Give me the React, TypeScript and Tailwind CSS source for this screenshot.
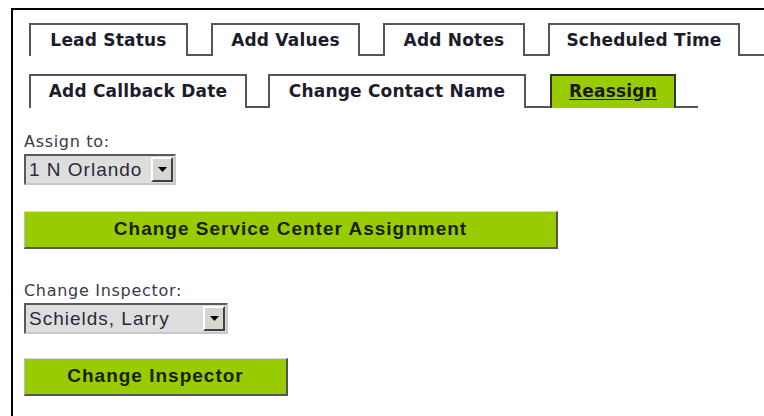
import React from 'react'

const tabFont = { fontFamily: '"DejaVu Sans", Verdana, sans-serif' }
const formFont = { fontFamily: '"Liberation Sans", Arial, sans-serif' }

type TabProps = { label: string; width: string; active?: boolean }

function Tab({ label, width, active }: TabProps) {
  return (
    <div
      className={`${width} shrink-0 h-full flex items-center justify-center border-t-2 border-l-2 border-r-2 text-[17px] font-bold tracking-[0.2px] ${
        active ? 'bg-[#99cc00] border-[#333] text-[#1a1a1a] underline underline-offset-2' : 'bg-white border-[#555] text-[#1c1c2a]'
      }`}
      style={tabFont}
    >
      {label}
    </div>
  )
}

function Gap({ width }: { width: string }) {
  return <div className={`${width} shrink-0 h-full border-b-2 border-[#555]`} />
}

function Select({ value, width }: { value: string; width: string }) {
  return (
    <div
      className={`${width} h-[31px] flex items-center justify-between border-2 border-t-[#5a5a5a] border-l-[#5a5a5a] border-b-[#c8c8c8] border-r-[#c8c8c8] bg-[#dedede] pl-[3px] pr-[1px]`}
    >
      <span className="text-[19px] tracking-[1px] text-[#2a2a3a] leading-none" style={formFont}>
        {value}
      </span>
      <div className="w-[22px] h-[25px] flex items-center justify-center bg-[#d8d6d0] border-2 border-t-white border-l-white border-b-[#404040] border-r-[#404040]">
        <svg width="9" height="5" viewBox="0 0 9 5">
          <path d="M0 0h9L4.5 5z" fill="#000" />
        </svg>
      </div>
    </div>
  )
}

function GreenButton({ label, width }: { label: string; width: string }) {
  return (
    <button
      className={`${width} h-[38px] flex items-center justify-center bg-[#99cc00] border-t border-l border-t-[#d8d8d8] border-l-[#bcbcbc] border-b-2 border-r-2 border-b-[#555] border-r-[#555] text-[19px] font-bold tracking-[1px] text-[#1a1f00]`}
      style={formFont}
    >
      {label}
    </button>
  )
}

export default function App() {
  return (
    <div className="w-[764px] h-[416px] bg-white overflow-hidden pl-[11px] pt-[8px]">
      <div className="w-[780px] h-full border-l-2 border-t-2 border-black pl-[11px] pt-[13px]">
        {/* Tab rows */}
        <div className="ml-[5px]">
          <div className="flex items-end h-[33px]">
            <Tab label="Lead Status" width="w-[159px]" />
            <Gap width="w-[23px]" />
            <Tab label="Add Values" width="w-[149px]" />
            <Gap width="w-[23px]" />
            <Tab label="Add Notes" width="w-[142px]" />
            <Gap width="w-[23px]" />
            <Tab label="Scheduled Time" width="w-[192px]" />
            <Gap width="w-[40px]" />
          </div>
          <div className="flex items-end h-[34px] mt-[18px]">
            <Tab label="Add Callback Date" width="w-[218px]" />
            <Gap width="w-[21px]" />
            <Tab label="Change Contact Name" width="w-[258px]" />
            <Gap width="w-[24px]" />
            <Tab label="Reassign" width="w-[126px]" active />
            <Gap width="w-[22px]" />
          </div>
        </div>

        {/* Reassign form */}
        <div className="mt-[24px] text-[16px] leading-[20px] tracking-[0.7px] text-[#3a3a4a]" style={tabFont}>
          Assign to:
        </div>
        <div className="mt-[2px]">
          <Select value="1 N Orlando" width="w-[152px]" />
        </div>
        <div className="mt-[26px]">
          <GreenButton label="Change Service Center Assignment" width="w-[534px]" />
        </div>

        <div className="mt-[32px] text-[16px] leading-[20px] tracking-[0.7px] text-[#3a3a4a]" style={tabFont}>
          Change Inspector:
        </div>
        <div className="mt-[2px]">
          <Select value="Schields, Larry" width="w-[204px]" />
        </div>
        <div className="mt-[24px]">
          <GreenButton label="Change Inspector" width="w-[264px]" />
        </div>
      </div>
    </div>
  )
}
